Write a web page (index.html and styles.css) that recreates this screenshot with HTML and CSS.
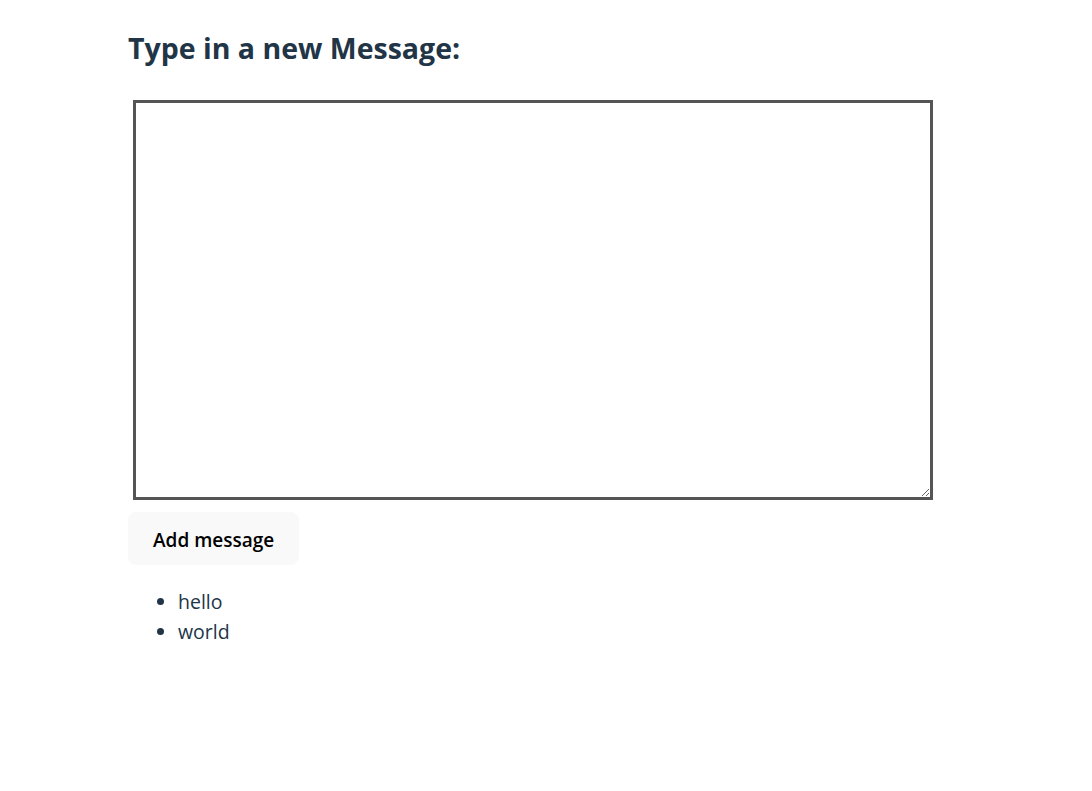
FILE: index.html
```html
<!DOCTYPE html>
<html>
<head>
<meta charset="utf-8">
<link rel="stylesheet" href="styles.css">
</head>
<body>
<main class="page">
  <h1 class="title">Type in a new Message:</h1>
  <textarea class="message-input"></textarea>
  <button class="add-btn">Add message</button>
  <ul class="messages">
    <li>hello</li>
    <li>world</li>
  </ul>
</main>
</body>
</html>
```
FILE: styles.css
```css
html, body {
  margin: 0;
  padding: 0;
  background: #ffffff;
}
body {
  font-family: "Open Sans", "Noto Sans", sans-serif;
  font-size: 19.5px;
  line-height: 1.5;
  color: #213547;
}
.page {
  display: flex;
  flex-direction: column;
  align-items: flex-start;
  padding: 26px 0 0 128px;
}
.title {
  margin: 0;
  font-size: 28.5px;
  font-weight: 700;
  line-height: 44px;
}
.message-input {
  box-sizing: border-box;
  width: 800px;
  height: 400px;
  margin: 30px 0 0 5px;
  border: 3px solid #555555;
  padding: 2px;
  background: #fff;
  resize: both;
  font-family: inherit;
}
.add-btn {
  margin-top: 12px;
  border: none;
  border-radius: 8px;
  background: #f9f9f9;
  padding: 2px 25px 0 25px;
  height: 53px;
  font-family: inherit;
  font-size: 19px;
  font-weight: 600;
  color: #000;
  cursor: pointer;
}
.messages {
  margin: 22px 0 0 0;
  padding-left: 50px;
}
.messages li {
  line-height: 30px;
}
```
